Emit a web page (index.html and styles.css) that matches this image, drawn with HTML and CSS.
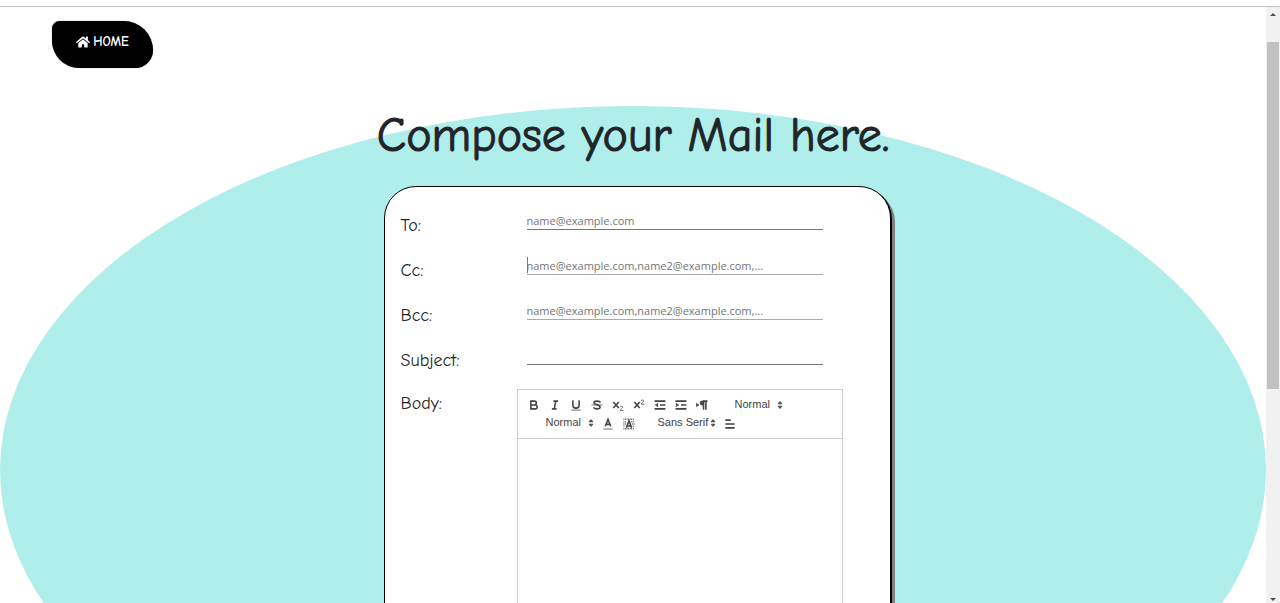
FILE: index.html
```html
<!DOCTYPE html>
<html lang="en">
<head>
<meta charset="utf-8">
<title>Compose Mail</title>
<link rel="stylesheet" href="styles.css">
</head>
<body>
<div class="window">
  <div class="page">
    <nav class="nav">
      <a class="home" href="#">
        <svg class="home-icon" viewBox="0 0 576 512" aria-hidden="true"><path fill="currentColor" d="M280 148L96 300v164a16 16 0 0 0 16 16l112-1a16 16 0 0 0 16-16v-95a16 16 0 0 1 16-16h64a16 16 0 0 1 16 16v95a16 16 0 0 0 16 16l112 1a16 16 0 0 0 16-16V300L296 148a12 12 0 0 0-16 0zM572 251l-84-69V44a12 12 0 0 0-12-12h-56a12 12 0 0 0-12 12v72l-90-74a48 48 0 0 0-61 0L4 251a12 12 0 0 0-1 17l25 31a12 12 0 0 0 17 2L280 107a12 12 0 0 1 16 0l235 194a12 12 0 0 0 17-2l25-31a12 12 0 0 0-1-17z"/></svg>
        <span>HOME</span>
      </a>
    </nav>
    <main class="compose">
      <h1 class="title">Compose your Mail here.</h1>
      <form class="card">
        <div class="row"><label for="to">To:</label><input class="line" id="to" type="email" placeholder="name@example.com"></div>
        <div class="row"><label for="cc">Cc:</label><span class="field focused"><input class="line light" id="cc" type="text" placeholder="name@example.com,name2@example.com,..."></span></div>
        <div class="row"><label for="bcc">Bcc:</label><input class="line light" id="bcc" type="text" placeholder="name@example.com,name2@example.com,..."></div>
        <div class="row"><label for="subject">Subject:</label><input class="line" id="subject" type="text"></div>
        <div class="row body-row">
          <label for="body">Body:</label>
          <div class="editor">
            <div class="toolbar">
              <div class="tools">
                <button class="tool" type="button" aria-label="Bold"><svg viewBox="0 0 18 18"><path d="M5 4h4.500a2.500 2.500 0 0 1 0 5H5zM5 9h5.500a2.500 2.500 0 0 1 0 5H5z"/></svg></button>
                <button class="tool" type="button" aria-label="Italic"><svg viewBox="0 0 18 18"><path d="M7 4h6M5 14h6M8 14l2-10"/></svg></button>
                <button class="tool" type="button" aria-label="Underline"><svg viewBox="0 0 18 18"><path d="M5 3v6a4 4 0 0 0 8 0V3"/><path class="thin" d="M3 15.500h12"/></svg></button>
                <button class="tool" type="button" aria-label="Strikethrough"><svg viewBox="0 0 18 18"><path class="thin" d="M2 9h14"/><path d="M13 6c0-2-2-2-4-2S5 4 5 6c0 3 8 2 8 6 0 2-2 2-4 2s-4 0-4-2"/></svg></button>
                <button class="tool" type="button" aria-label="Subscript"><svg viewBox="0 0 18 18"><path d="M3 5l7 8M10 5l-7 8"/><path class="thin" d="M12 12c0-2 3-2 3 0 0 1-3 2-3 4h4"/></svg></button>
                <button class="tool" type="button" aria-label="Superscript"><svg viewBox="0 0 18 18"><path d="M3 5l7 8M10 5l-7 8"/><path class="thin" d="M12 4c0-2 3-2 3 0 0 1-3 2-3 4h4"/></svg></button>
                <button class="tool" type="button" aria-label="Decrease indent"><svg viewBox="0 0 18 18"><path d="M2 4h14M2 14h14M9 9h7"/><path class="solid" d="M6 7v4L3 9z"/></svg></button>
                <button class="tool" type="button" aria-label="Increase indent"><svg viewBox="0 0 18 18"><path d="M2 4h14M2 14h14M9 9h7"/><path class="solid" d="M3 7v4l3-2z"/></svg></button>
                <button class="tool" type="button" aria-label="Text direction"><svg viewBox="0 0 18 18"><path class="solid" d="M2 7v4l3-2z"/><path d="M11 4v11M14 4v11M10 4h6"/><path class="solid" d="M11 4H9a2 2 0 0 0 0 5h2z"/></svg></button>
                <span class="picker push"><select aria-label="Size"><option>Normal</option></select><svg viewBox="0 0 18 18"><path class="solid" d="M6.500 7.500l2.500-3 2.500 3zM6.500 10.500l2.500 3 2.500-3z"/></svg></span>
              </div>
              <div class="tools">
                <span class="picker push"><select aria-label="Heading"><option>Normal</option></select><svg viewBox="0 0 18 18"><path class="solid" d="M6.500 7.500l2.500-3 2.500 3zM6.500 10.500l2.500 3 2.500-3z"/></svg></span>
                <button class="tool" type="button" aria-label="Text color"><svg viewBox="0 0 18 18"><path d="M5.500 12L9 3l3.500 9M6.500 9.500h5"/><path class="thin" d="M3 15.500h12"/></svg></button>
                <button class="tool" type="button" aria-label="Background color"><svg viewBox="0 0 18 18"><path class="dots" d="M2 3h14M2 6h4M12 6h4M2 9h3M13 9h3M2 12h2M14 12h2M2 15h14"/><path d="M5.500 14L9 5l3.500 9M6.500 11.500h5"/></svg></button>
                <span class="picker wide"><select aria-label="Font"><option>Sans Serif</option></select><svg viewBox="0 0 18 18"><path class="solid" d="M6.500 7.500l2.500-3 2.500 3zM6.500 10.500l2.500 3 2.500-3z"/></svg></span>
                <button class="tool" type="button" aria-label="Align"><svg viewBox="0 0 18 18"><path d="M3 4h7M3 9h12M3 14h12"/></svg></button>
              </div>
            </div>
            <textarea class="message" id="body"></textarea>
          </div>
        </div>
      </form>
    </main>
  </div>
  <div class="scrollbar" aria-hidden="true">
    <svg class="arrow" viewBox="0 0 14 14"><path d="M4 9l3-3 3 3z"/></svg>
    <div class="thumb"></div>
    <svg class="arrow down" viewBox="0 0 14 14"><path d="M4 9l3 3 3-3z"/></svg>
  </div>
</div>
</body>
</html>
```
FILE: styles.css
```css
* { box-sizing: border-box; }

body {
  margin: 0;
  padding-top: 6px;
  height: 100vh;
  overflow: hidden;
  background: #fff;
  color: #212529;
  font-family: "Comic Sans MS", "Comic Neue", "Open Sans", sans-serif;
}

.window {
  display: flex;
  height: 100%;
  border-top: 1px solid #c4c4c4;
}

.page {
  flex: 1;
  min-width: 0;
  overflow: hidden;
}

.nav {
  display: flex;
  height: 99px;
  padding: 14px 52px;
}

.home {
  display: flex;
  justify-content: center;
  gap: 3px;
  width: 101px;
  height: 47px;
  padding-top: 12px;
  border-radius: 8px 30px 18px 28px;
  background: #000;
  box-shadow: 0 0 1px #555;
  color: #fff;
  font-size: 13px;
  font-weight: 700;
  line-height: 18px;
  text-decoration: none;
}

.home-icon { width: 14px; height: 18px; }

/* Tall ellipse that holds the heading and the form */
.compose {
  display: flex;
  flex-direction: column;
  align-items: center;
  height: 728px;
  border-radius: 50%;
  background: #afeeea;
}

.title {
  margin: 0;
  height: 80px;
  font-size: 48px;
  font-weight: 400;
  line-height: 60px;
  white-space: nowrap;
  -webkit-text-stroke: 1px currentColor;
}

.card {
  flex: 1;
  display: flex;
  flex-direction: column;
  width: 40%;
  min-width: 507px;
  margin-left: 8px;
  padding: 17px 47px 0 16px;
  border: 1px solid #000;
  border-radius: 32px;
  background: #fff;
  box-shadow: 1px 1px 0 #000, 4px 4px 0 #808080;
}

.row {
  display: grid;
  grid-template-columns: 116px 1fr;
  height: 45px;
}

.row label {
  padding-top: 10px;
  font-size: 18px;
  line-height: 24px;
}

.line {
  height: 26px;
  margin: 0 20px 0 10px;
  padding: 8px 0 0;
  border: 0;
  border-bottom: 1px solid #767676;
  border-radius: 0;
  background: none;
  outline: 0;
  font-family: "Segoe UI", "Open Sans", sans-serif;
  font-size: 11px;
  line-height: 16px;
}

.line::placeholder { color: #757575; }
.line.light { border-color: #a9a9a9; }

.field { position: relative; display: grid; align-content: start; }

.focused::before {
  content: "";
  position: absolute;
  left: 10px;
  top: 8px;
  width: 1px;
  height: 16px;
  background: #777;
}

.body-row { flex: 1; }

.body-row label { padding-top: 8px; }

.editor {
  display: flex;
  flex-direction: column;
  margin-top: 5px;
  border: 1px solid #ccc;
}

.toolbar {
  padding: 5px 0 6px 6px;
  border-bottom: 1px solid #ccc;
}

.tools { display: flex; height: 19px; }
.tools + .tools { margin-top: -1px; }
.tools + .tools .tool { padding-top: 4px; padding-bottom: 1px; }

.tool {
  width: 21px;
  height: 19px;
  padding: 3px;
  border: 0;
  background: none;
}

.tool svg { display: block; width: 14px; height: 14px; margin: auto; }

.toolbar path { fill: none; stroke: #444; stroke-width: 2; }
.toolbar .thin { stroke-width: 1; }
.toolbar .solid { fill: #444; stroke-width: 1; }
.toolbar .dots { stroke-width: 2; stroke-dasharray: 1 1; }

.picker { position: relative; width: 52px; height: 16px; }
.push { margin-left: 22px; }
.wide { width: 62px; margin-left: 18px; }

.picker select {
  display: block;
  appearance: none;
  width: 100%;
  height: 18px;
  padding: 0;
  border: 0;
  background: none;
  color: #444;
  font: 11px/16px "Liberation Sans", Arial, sans-serif;
}

.picker svg {
  position: absolute;
  right: 0;
  top: 3px;
  width: 14px;
  height: 14px;
  pointer-events: none;
}

.wide svg { right: 0; }

.message {
  flex: 1;
  width: 100%;
  padding: 12px;
  border: 0;
  outline: 0;
  resize: none;
  background: none;
}

.scrollbar {
  display: grid;
  grid-template-rows: 35px 347fr 214fr;
  width: 14px;
  background: #f1f1f1;
}

.thumb { margin: 0 1px; background: #c1c1c1; }
.arrow { width: 14px; height: 14px; fill: #505050; }
.down { align-self: end; }
```
